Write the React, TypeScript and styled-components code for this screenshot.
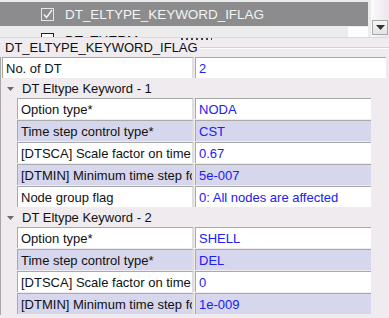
import styled, { createGlobalStyle } from "styled-components";

interface Field {
  label: string;
  value: string;
}

const groups: { title: string; fields: Field[] }[] = [
  {
    title: "DT Eltype Keyword - 1",
    fields: [
      { label: "Option type*", value: "NODA" },
      { label: "Time step control type*", value: "CST" },
      { label: "[DTSCA] Scale factor on time step", value: "0.67" },
      { label: "[DTMIN] Minimum time step for", value: "5e-007" },
      { label: "Node group flag", value: "0: All nodes are affected" },
    ],
  },
  {
    title: "DT Eltype Keyword - 2",
    fields: [
      { label: "Option type*", value: "SHELL" },
      { label: "Time step control type*", value: "DEL" },
      { label: "[DTSCA] Scale factor on time step", value: "0" },
      { label: "[DTMIN] Minimum time step for", value: "1e-009" },
    ],
  },
];

const GlobalStyle = createGlobalStyle`
  body {
    margin: 0;
    background: #efebef;
    font-family: "Liberation Sans", Arial, sans-serif;
    font-size: 13px;
    overflow: hidden;
  }
`;

const CheckIcon = ({ light }: { light?: boolean }) => (
  <svg width="13" height="13" viewBox="0 0 13 13">
    <rect
      x="0.5"
      y="0.5"
      width="12"
      height="12"
      fill={light ? "none" : "#fff"}
      stroke={light ? "#e6e6e6" : "#222"}
    />
    {light && (
      <path d="M3 6.5 L5.5 9.5 L11 2" fill="none" stroke="#f2f2f2" strokeWidth="1.4" />
    )}
  </svg>
);

export default function App() {
  return (
    <>
      <GlobalStyle />
      <Page>
        <ListArea>
          <ListItems>
            <TopStrip />
            <ListRow $selected>
              <CheckWrap>
                <CheckIcon light />
              </CheckWrap>
              <ItemText $selected>DT_ELTYPE_KEYWORD_IFLAG</ItemText>
            </ListRow>
            <ListRow>
              <CheckWrap>
                <CheckIcon />
              </CheckWrap>
              <ItemText>DT_THERM</ItemText>
              <RowTail />
            </ListRow>
          </ListItems>
          <ScrollBar>
            <ScrollButton>
              <svg width="9" height="5" viewBox="0 0 9 5">
                <path d="M0 0 H9 L4.5 5 Z" fill="#333" />
              </svg>
            </ScrollButton>
          </ScrollBar>
        </ListArea>
        <Splitter>
          <Dots />
        </Splitter>
        <GroupTitle>
          <span>DT_ELTYPE_KEYWORD_IFLAG</span>
          <TitleLine />
        </GroupTitle>
        <Grid>
          <Row $indent={2}>
            <LabelCell $wide>No. of DT</LabelCell>
            <ValueCell $width={191}>2</ValueCell>
          </Row>
          {groups.map((g) => (
            <div key={g.title}>
              <GroupHeader>
                <Arrow viewBox="0 0 7 4">
                  <path d="M0 0 H7 L3.5 4 Z" fill="#6a6a6a" />
                </Arrow>
                {g.title}
              </GroupHeader>
              {g.fields.map((f, i) => (
                <Row key={f.label} $indent={17}>
                  <LabelCell $alt={i % 2 === 1}>{f.label}</LabelCell>
                  <ValueCell $alt={i % 2 === 1} $width={176}>
                    {f.value}
                  </ValueCell>
                </Row>
              ))}
            </div>
          ))}
        </Grid>
      </Page>
    </>
  );
}

const Page = styled.div`
  width: 389px;
  height: 318px;
  overflow: hidden;
`;

const ListArea = styled.div`
  display: flex;
  height: 37px;
  overflow: hidden;
  background: #ececec;
`;

const ListItems = styled.div`
  width: 368px;
  display: flex;
  flex-direction: column;
`;

const TopStrip = styled.div`
  height: 2px;
  flex-shrink: 0;
`;

const ListRow = styled.div<{ $selected?: boolean }>`
  position: relative;
  height: 24px;
  flex-shrink: 0;
  display: flex;
  align-items: center;
  background: ${(p) => (p.$selected ? "#8c8b8d" : "#ececec")};
  margin-bottom: 1px;
`;

const RowTail = styled.div`
  position: absolute;
  right: 0;
  top: 0;
  bottom: 0;
  width: 20px;
  background: #fdfdfd;
`;

const CheckWrap = styled.div`
  width: 13px;
  height: 13px;
  margin-left: 41px;
  margin-right: 11px;
  display: flex;
`;

const ItemText = styled.span<{ $selected?: boolean }>`
  font-size: 13.5px;
  letter-spacing: -0.05px;
  color: ${(p) => (p.$selected ? "#f4f4f4" : "#111")};
  margin-top: ${(p) => (p.$selected ? "0" : "2px")};
`;

const ScrollBar = styled.div`
  margin-left: 3px;
  width: 18px;
  background: linear-gradient(to right, #fbfbfb, #ede5ed);
  display: flex;
  flex-direction: column;
  justify-content: flex-end;
  padding-bottom: 2px;
  align-items: center;
`;

const ScrollButton = styled.div`
  width: 14px;
  height: 13px;
  border: 1px solid #a9a9a9;
  background: linear-gradient(#f6f6f6, #e4e4e4);
  display: flex;
  align-items: center;
  justify-content: center;
`;

const Splitter = styled.div`
  height: 1px;
  border-top: 1px solid #dcd8dc;
  position: relative;
`;

const Dots = styled.div`
  position: absolute;
  left: 181px;
  top: 0;
  width: 31px;
  height: 2px;
  background: repeating-linear-gradient(
    to right,
    #404040 0 2px,
    transparent 2px 5px
  );
`;

const GroupTitle = styled.div`
  display: flex;
  align-items: center;
  height: 16px;
  padding-left: 5px;
  font-size: 13px;
  color: #111;
  margin-bottom: 2px;
`;

const TitleLine = styled.div`
  flex: 1;
  margin-left: 2px;
  margin-top: 2px;
  border-top: 1px solid #d4d0d4;
  border-bottom: 1px solid #fbfbfb;
`;

const Grid = styled.div`
  border-left: 1px solid #a8a8a8;
  display: flex;
  flex-direction: column;
`;

const Row = styled.div<{ $indent: number }>`
  display: flex;
  height: 21px;
  margin-bottom: 1px;
  padding-left: ${(p) => p.$indent - 1}px;
`;

const cell = `
  box-sizing: border-box;
  height: 21px;
  border-top: 1px solid #a9a9a9;
  border-left: 1px solid #a9a9a9;
  padding: 2px 0 0 3px;
  white-space: nowrap;
  overflow: hidden;
  line-height: 17px;
`;

const LabelCell = styled.div<{ $alt?: boolean; $wide?: boolean }>`
  ${cell}
  width: ${(p) => (p.$wide ? 192 : 177)}px;
  background: ${(p) => (p.$alt ? "#d6d6ec" : "#ffffff")};
  color: #111;
  border-right: 2px solid #dedede;
`;

const ValueCell = styled.div<{ $alt?: boolean; $width: number }>`
  ${cell}
  width: ${(p) => p.$width}px;
  margin-left: 1px;
  background: ${(p) => (p.$alt ? "#d6d6ec" : "#ffffff")};
  color: #2020f0;
`;

const GroupHeader = styled.div`
  display: flex;
  align-items: center;
  height: 19px;
  color: #111;
  font-size: 13px;
`;

const Arrow = styled.svg`
  width: 7px;
  height: 4px;
  margin-left: 6px;
  margin-right: 8px;
`;
